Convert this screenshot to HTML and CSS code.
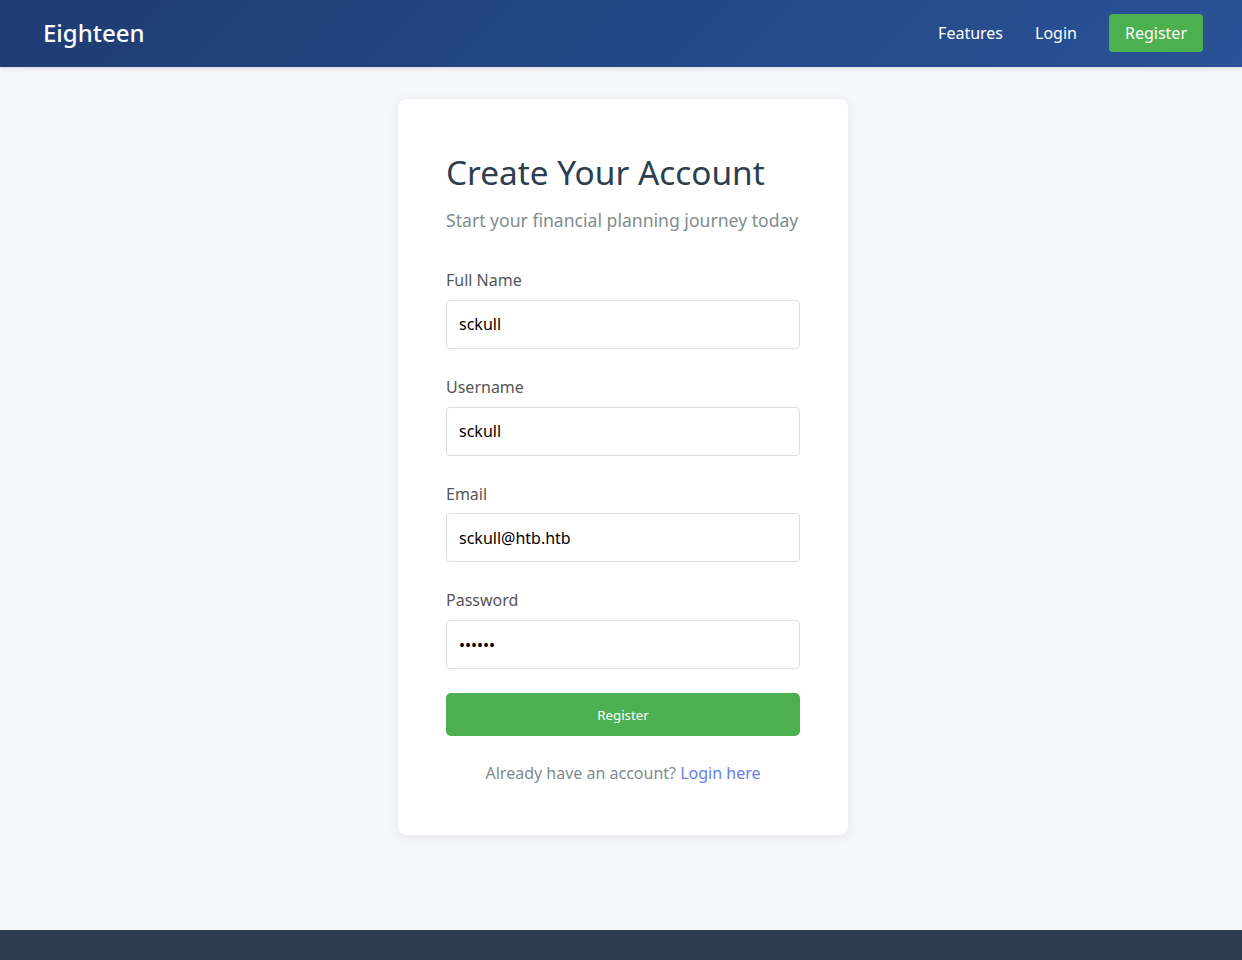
FILE: index.html
```html
<!DOCTYPE html>
<html lang="en">
<head>
<meta charset="utf-8">
<title>Register - Eighteen</title>
<link rel="stylesheet" href="styles.css">
</head>
<body>
<header class="topbar">
  <a class="brand" href="#">Eighteen</a>
  <nav class="nav">
    <a class="nav-link" href="#">Features</a>
    <a class="nav-link" href="#">Login</a>
    <a class="nav-link nav-cta" href="#">Register</a>
  </nav>
</header>
<main class="main">
  <div class="card">
    <h1 class="title">Create Your Account</h1>
    <p class="subtitle">Start your financial planning journey today</p>
    <form class="form">
      <div class="group">
        <label class="label">Full Name</label>
        <input class="input" type="text" value="sckull">
      </div>
      <div class="group">
        <label class="label">Username</label>
        <input class="input" type="text" value="sckull">
      </div>
      <div class="group">
        <label class="label">Email</label>
        <input class="input" type="email" value="sckull@htb.htb">
      </div>
      <div class="group">
        <label class="label">Password</label>
        <input class="input" type="password" value="secret">
      </div>
      <button class="submit" type="button">Register</button>
    </form>
    <p class="alt">Already have an account? <a class="alt-link" href="#">Login here</a></p>
  </div>
</main>
<footer class="footer"></footer>
</body>
</html>
```

FILE: styles.css
```css
* { box-sizing: border-box; }
html, body { margin: 0; padding: 0; }
body {
  font-family: "Noto Sans", "DejaVu Sans", sans-serif;
  background: #f5f7fa;
  color: #333;
  line-height: 1.6;
}
a { text-decoration: none; }

.topbar {
  height: 67px;
  background: linear-gradient(135deg, #1e3c72 0%, #2a5298 100%);
  display: flex;
  align-items: center;
  justify-content: space-between;
  padding: 0 39px 2px 43px;
  box-shadow: 0 2px 4px rgba(0,0,0,0.1);
  position: relative;
}
.brand {
  color: #fff;
  font-size: 24px;
  font-weight: 500;
  line-height: 1;
}
.nav { display: flex; align-items: center; gap: 32px; }
.nav-link {
  color: #fff;
  font-size: 16px;
  line-height: 22px;
  padding: 8px 0;
  border-radius: 4px;
}
.nav-cta { background: #4caf50; padding: 8px 16px; }

.main {
  min-height: 863px;
  padding: 32px 0 64px 4px;
  display: flex;
  justify-content: center;
  align-items: flex-start;
}
.card {
  width: 450px;
  background: #fff;
  border-radius: 8px;
  padding: 48px;
  box-shadow: 0 2px 12px rgba(0,0,0,0.08);
}
.title {
  margin: 0 0 8px;
  font-size: 33.4px;
  font-weight: 400;
  color: #2c3e50;
  line-height: 51px;
}
.subtitle {
  margin: 0 0 34px;
  font-size: 17.6px;
  color: #7f8c8d;
}
.group { margin-bottom: 26.2px; }
.form .group:last-of-type { margin-bottom: 24px; }
.label {
  display: block;
  margin-bottom: 6px;
  color: #555;
  font-size: 16px;
}
.input {
  display: block;
  width: 100%;
  height: 49px;
  padding: 0 12px;
  border: 1px solid #ddd;
  border-radius: 4px;
  font-family: "Noto Sans", sans-serif;
  font-size: 16px;
  color: #000;
  background: #fff;
}
.submit {
  display: block;
  width: 100%;
  height: 43px;
  margin-top: 0;
  border: none;
  border-radius: 5px;
  background: #4caf50;
  color: #fff;
  font-family: "Noto Sans", sans-serif;
  font-size: 13.33px;
}
.alt {
  margin: 25px 0 0;
  text-align: center;
  color: #7f8c8d;
  font-size: 16px;
}
.alt-link { color: #667eea; }

.footer {
  height: 120px;
  background: #2c3e50;
}
```
